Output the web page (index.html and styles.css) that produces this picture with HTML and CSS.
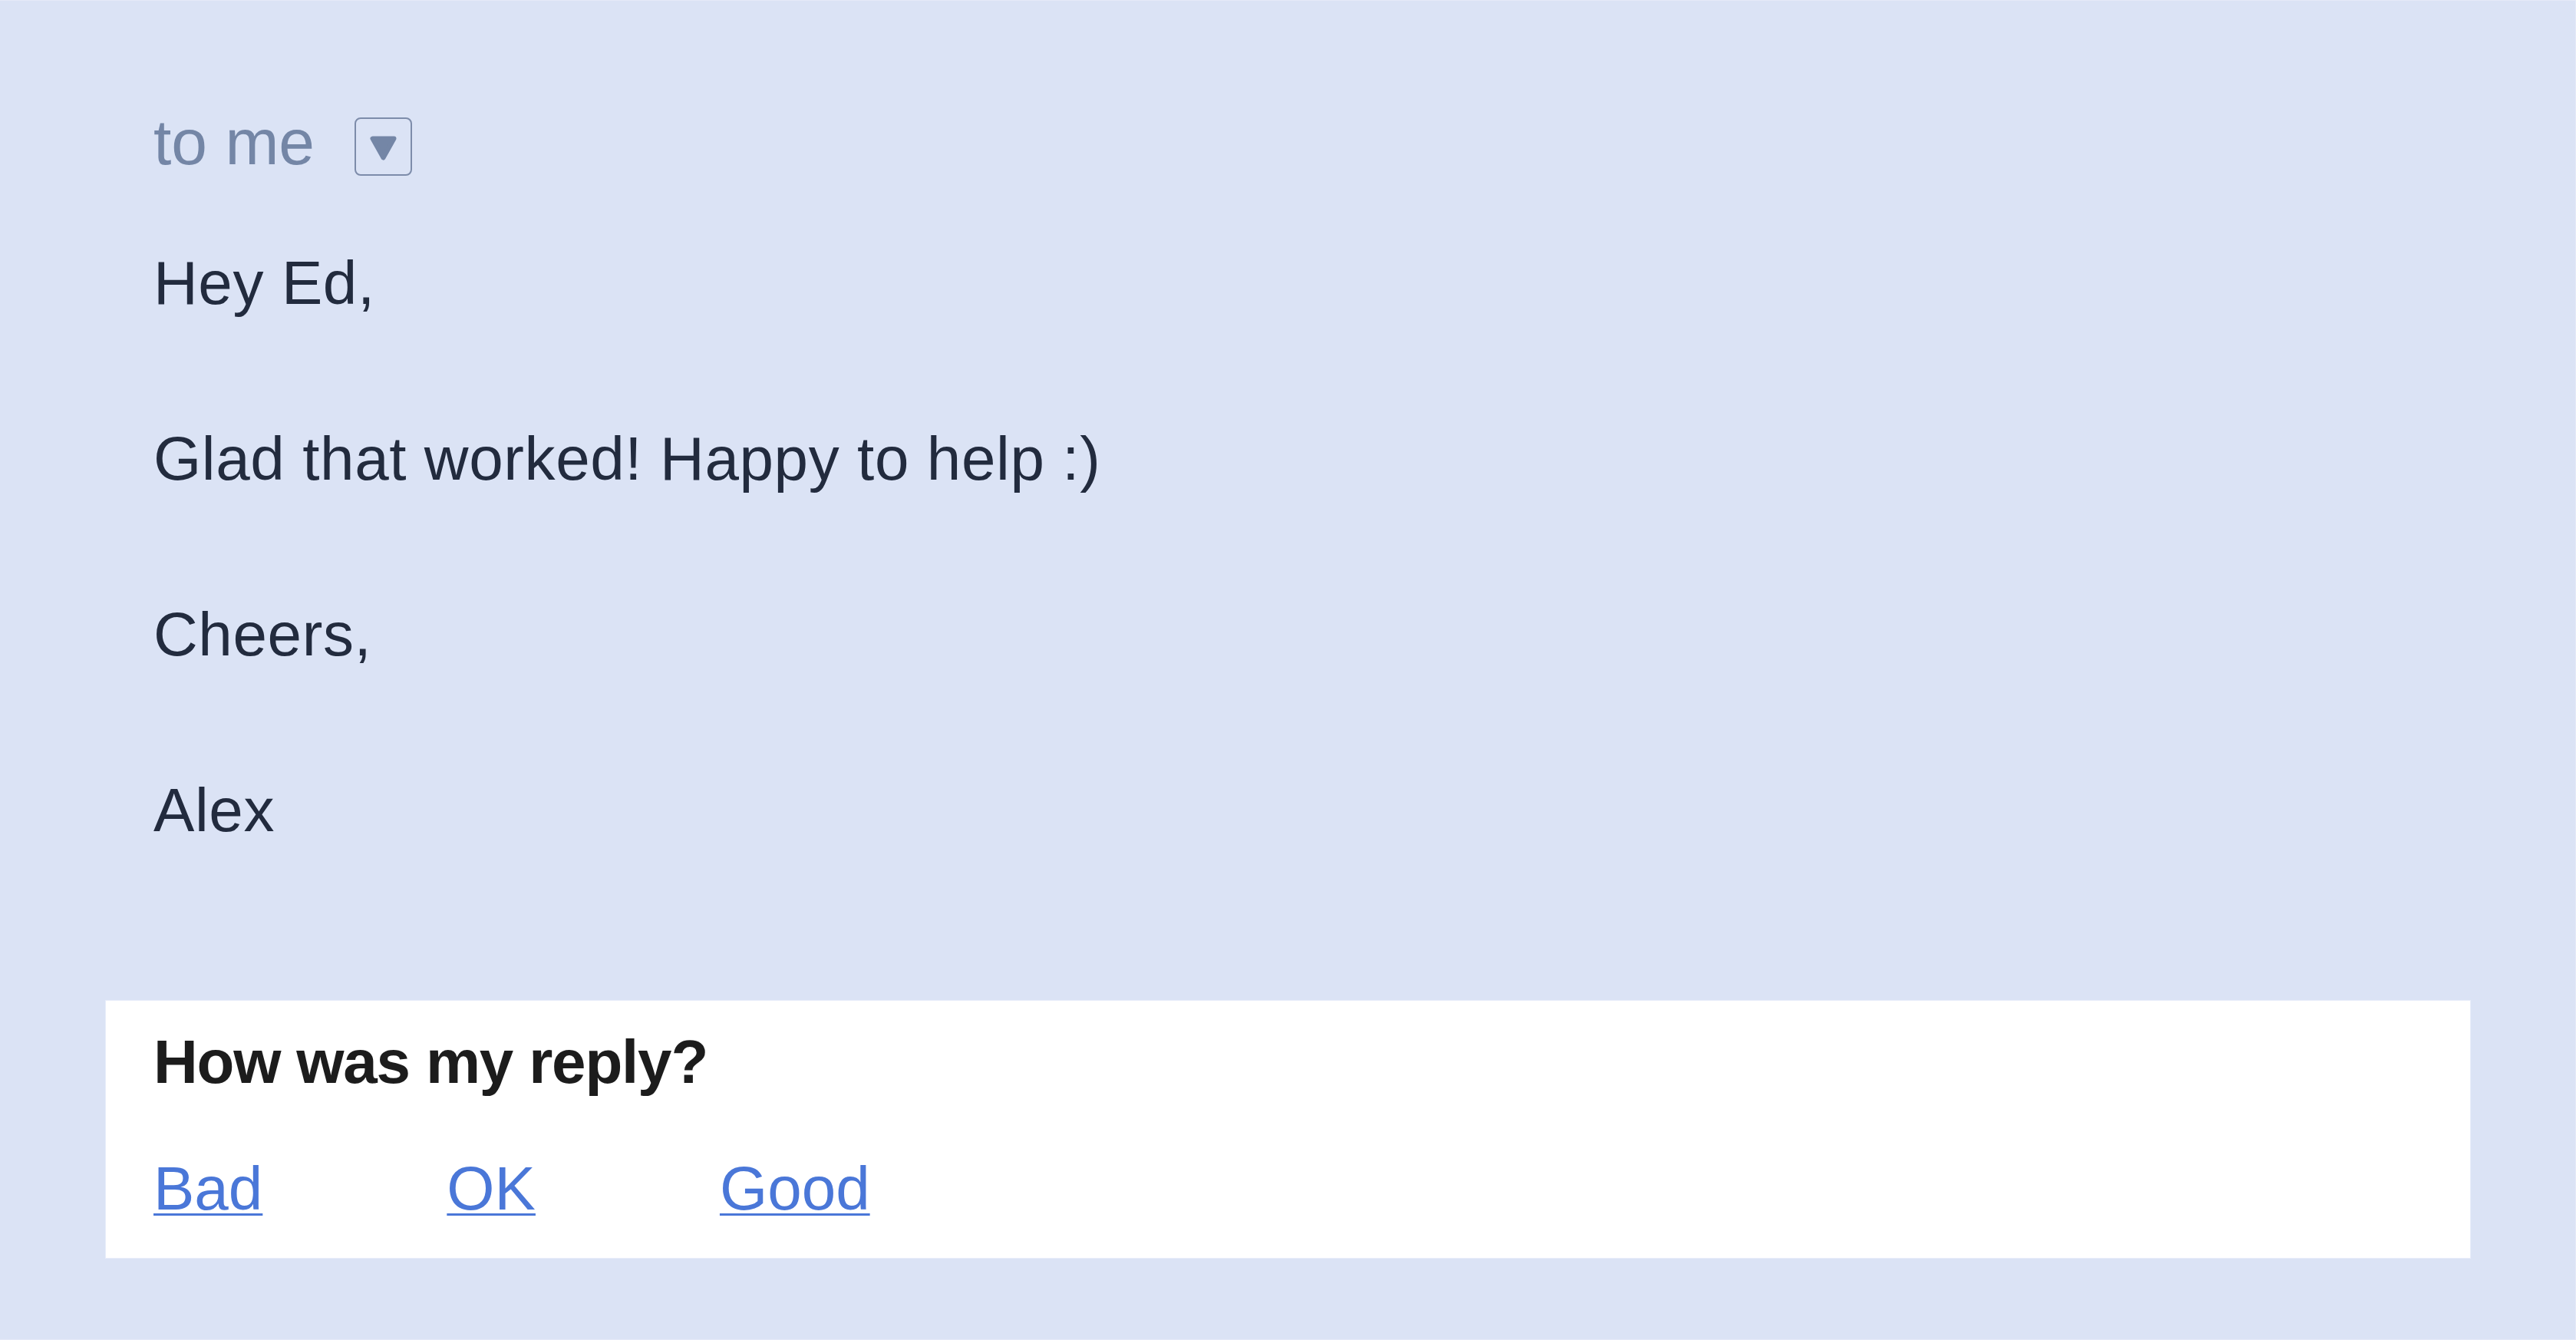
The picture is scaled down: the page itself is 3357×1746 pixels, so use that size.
FILE: index.html
```html
<!DOCTYPE html>
<html lang="en">
<head>
<meta charset="utf-8">
<title>Reply</title>
<link rel="stylesheet" href="styles.css">
</head>
<body>
<div class="page">
  <div class="message">
    <div class="recipient">
      <span class="to-me">to me</span>
      <span class="dropdown">
        <svg width="71" height="72" viewBox="0 0 71 72" aria-hidden="true">
          <path d="M21.5 25.5 L49.5 25.5 L35.5 50.5 Z" fill="#7486a6" stroke="#7486a6" stroke-width="6" stroke-linejoin="round"/>
        </svg>
      </span>
    </div>
    <div class="body-text">
      <p>Hey Ed,</p>
      <p class="blank">&nbsp;</p>
      <p>Glad that worked! Happy to help :)</p>
      <p class="blank">&nbsp;</p>
      <p>Cheers,</p>
      <p class="blank">&nbsp;</p>
      <p>Alex</p>
    </div>
  </div>
  <div class="feedback">
    <h2 class="feedback-title">How was my reply?</h2>
    <div class="feedback-links">
      <a href="#" class="rate">Bad</a>
      <a href="#" class="rate">OK</a>
      <a href="#" class="rate">Good</a>
    </div>
  </div>
</div>
</body>
</html>
```
FILE: styles.css
```css
html, body {
  margin: 0;
  padding: 0;
}
body {
  background: #dbe3f5;
  font-family: "Liberation Sans", Arial, sans-serif;
}
.page {
  box-sizing: border-box;
  width: 3357px;
  height: 1746px;
  background: #dbe3f5;
  border-top: 1px solid #e5eaf8;
  border-right: 1px solid #e5eaf8;
  border-bottom: 1px solid #e5eaf8;
  padding: 142px 136px 0 137px;
  display: flex;
  flex-direction: column;
}
.message {
  padding: 0 63px;
}
.recipient {
  display: flex;
  align-items: flex-start;
  gap: 52px;
}
.to-me {
  font-size: 84px;
  line-height: 84px;
  color: #7486a6;
}
.dropdown {
  box-sizing: border-box;
  margin-top: 10px;
  width: 75px;
  height: 76px;
  border: 2px solid #7d8caa;
  border-radius: 8px;
  display: flex;
}
.body-text {
  margin-top: 83px;
  font-size: 80px;
  line-height: 114.5px;
  color: #222b3e;
  letter-spacing: 0.6px;
}
.body-text p {
  margin: 0;
}
.feedback {
  margin-top: 189px;
  box-sizing: border-box;
  height: 337px;
  background: #ffffff;
  border: 1px solid #e8edfa;
  padding: 40px 62px 0;
}
.feedback-title {
  margin: 0;
  font-size: 80px;
  line-height: 80px;
  font-weight: 700;
  color: #1c1c1c;
  letter-spacing: -1.2px;
}
.feedback-links {
  margin-top: 85px;
  display: flex;
  gap: 240px;
  font-size: 80px;
  line-height: 80px;
}
.rate {
  color: #4a77d8;
  text-decoration: underline;
  text-decoration-thickness: 3px;
  text-underline-offset: 5px;
}
```
